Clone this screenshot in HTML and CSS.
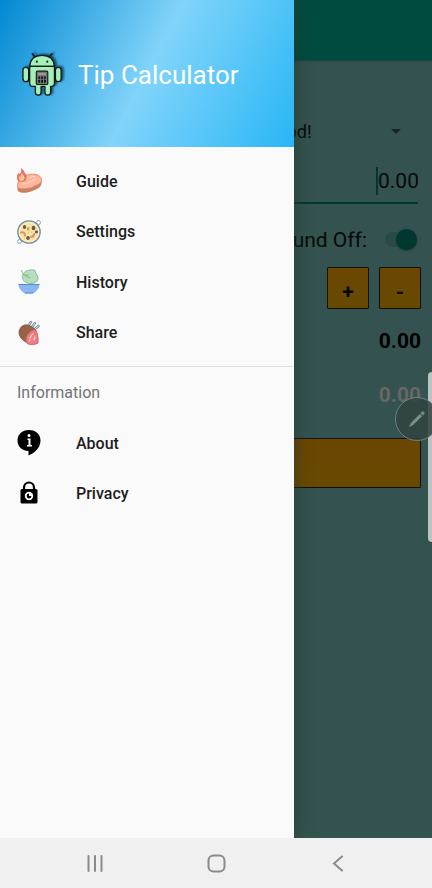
FILE: index.html
```html
<!DOCTYPE html>
<html lang="en">
<head>
<meta charset="utf-8">
<meta name="viewport" content="width=device-width, initial-scale=1">
<title>Tip Calculator</title>
<link rel="stylesheet" href="styles.css">
</head>
<body>
<div class="screen">
  <main class="app">
    <header class="toolbar"></header>
    <form class="form">
      <div class="service">
        <select class="service-select" aria-label="Service quality"><option>Good!</option></select>
        <svg class="caret" viewBox="0 0 10 5" aria-hidden="true"><path d="M0 0h10L5 5z" fill="#142523"/></svg>
      </div>
      <div class="amount"><span class="cursor"></span><input class="amount-input" type="text" value="0.00" aria-label="Bill amount"></div>
      <div class="round">
        <label for="round">Round Off:</label>
        <input class="switch" id="round" type="checkbox" role="switch" checked>
      </div>
      <div class="steps">
        <button class="gold step" type="button">+</button>
        <button class="gold step" type="button">-</button>
      </div>
      <output class="result">0.00</output>
      <output class="result faded">0.00</output>
      <button class="gold submit" type="button" aria-label="Calculate"></button>
    </form>
    <div class="edge-panel"></div>
    <button class="pen" type="button" aria-label="Pen menu">
      <svg viewBox="0 0 44 44" aria-hidden="true"><path d="M14 30l2-4 9-9 2 2-9 9zM26 16l2-2 2 2-2 2z" fill="#71908d" stroke="#71908d" stroke-width=".6" stroke-linejoin="round"/></svg>
    </button>
  </main>

  <aside class="drawer">
    <header class="drawer-head">
      <svg class="logo" viewBox="0 0 44 48" aria-hidden="true">
        <g fill="#a5efb9" stroke="#101c1a" stroke-width="1.4" stroke-linejoin="round" stroke-linecap="round">
          <path d="M14 6l-3-4M28 6l3-4" stroke-width="1.8"/>
          <rect x="1" y="16" width="6" height="15" rx="3"/>
          <rect x="35" y="16" width="6" height="15" rx="3"/>
          <path d="M8 15Q9 3.500 21 3.500T34 15z"/>
          <path d="M8 15h26v18q0 3-3 3h-1v6q0 3-3 3t-3-3v-6h-4v6q0 3-3 3t-3-3v-6h-3q-3 0-3-3z"/>
        </g>
        <circle cx="15.500" cy="10" r="1.100" fill="#101c1a"/><circle cx="26.500" cy="10" r="1.100" fill="#101c1a"/>
        <rect x="15" y="20" width="12" height="14" rx="1" fill="#777" stroke="#181818" stroke-width="1.200"/>
        <path d="M17 22h8v2h-8z" fill="#999"/>
        <path d="M17 25.500h2v2.500h-2zM20 25.500h2v2.500h-2zM23 25.500h2v2.500h-2zM17 29h2v3h-2zM20 29h2v3h-2zM23 29h2v3h-2z" fill="#151515"/>
      </svg>
      <h1 class="title">Tip Calculator</h1>
    </header>
    <nav class="menu">
      <ul class="list">
        <li><a class="item" href="#guide">
          <svg viewBox="0 0 26 26" aria-hidden="true">
            <path d="M1.500 17C2 12 6 9 11 7c5-2 14-1 14.500 5v4c-1 4-5 5-9 7-5 2-11 2.500-14 .500-1.500-1-1-4-1-6.500z" fill="#c98263"/>
            <path d="M1.500 17C2 12 6 9 11 7c5-2 14-1 14.500 5 0 4-5 5-9 7-4 1.500-10 2.500-14 1-1-.5-1-2-1-3z" fill="#ffb69b" stroke="#dc8d6f" stroke-width=".8"/>
            <path d="M7 16q4 0 7-2l6-3M14 9.500q3-1.500 5-1" fill="none" stroke="#ffdccb" stroke-linecap="round"/>
            <path d="M5 0q4 3 4 6l1-1q2 9-4 9-6 0-5-6l1-3 2 1q2-3 1-6z" fill="#e8736c"/>
            <path d="M5.500 5q3 3 3 5t-2.500 3q-4 0-3-5l1.500 1z" fill="#ffc98d"/>
          </svg><span>Guide</span></a></li>
        <li><a class="item" href="#settings">
          <svg viewBox="0 0 26 26" aria-hidden="true">
            <g fill="none" stroke="#8ea4b8"><circle cx="22.500" cy="3.500" r="2"/><circle cx="3.500" cy="22.500" r="2"/></g>
            <circle cx="13" cy="13" r="11.200" fill="#f8e5a2" stroke="#7890a6" stroke-width="1.300"/>
            <circle cx="13" cy="13" r="9.500" fill="none" stroke="#fff2c5"/>
            <g fill="#66585c"><ellipse cx="8.500" cy="8" rx="1.700" ry="2"/><ellipse cx="17.500" cy="9" rx="1.900" ry="2.200"/><ellipse cx="12" cy="19" rx="1.800" ry="2"/><ellipse cx="20.500" cy="13" rx="1.700" ry="1.400"/></g>
            <g fill="none" stroke="#e58b74" stroke-width="2" stroke-linecap="round"><path d="M5 13.500q4-1 4 3M15 18q3 0 3-3M12.500 9q-1 1 0 1.500"/></g>
            <path d="M12 14h1M8 19h1M15 13h1" stroke="#c6bb68"/>
          </svg><span>Settings</span></a></li>
        <li><a class="item" href="#history">
          <svg viewBox="0 0 26 26" aria-hidden="true">
            <path d="M6.500 7C7 3 11 .500 18 1c2 0 1 3 3 5 3 5-1 8.500-6 8.500S6 12 6.500 7z" fill="#b8dfbd" stroke="#7db891" stroke-width=".9"/>
            <path d="M5.500 1q1 6 9 8M9 6h4" fill="none" stroke="#7db891"/>
            <path d="M2.500 15h21q0 6-6.500 9.500H9Q2.500 21 2.500 15z" fill="#8bb7f0"/>
            <path d="M2.500 15.500h21M9 24h8" stroke="#5685ca"/>
          </svg><span>History</span></a></li>
        <li><a class="item" href="#share">
          <svg viewBox="0 0 26 26" aria-hidden="true">
            <g fill="none" stroke="#788f9d" stroke-width="2.600" stroke-linecap="round"><path d="M12 6l3-4M16 7l3-4M19 9l3.500-3"/></g>
            <g fill="none" stroke="#dce7ec" stroke-linecap="round"><path d="M12 6l3-4M16 7l3-4M19 9l3.500-3"/></g>
            <path d="M11 5c6 1 10 5 10 10 0 8-4 9-7 8.500C8 22 3 18 3 12.500 3 8 7 4 11 5z" fill="#966347" stroke="#7c5039" stroke-width=".7"/>
            <path d="M19.500 10c2 3 3 8 2.500 13-3 2-8 2-11 .500-1.500-3-1-6 1-9 2-3 5-5 7.500-4.500z" fill="#f37c80" stroke="#d46770"/>
            <path d="M14 18q1-3 3-4M18 20l1-3M13.500 21l.5-1" fill="none" stroke="#ffdadb" stroke-width="1.300" stroke-linecap="round"/>
          </svg><span>Share</span></a></li>
      </ul>
      <h2 class="section">Information</h2>
      <ul class="list">
        <li><a class="item" href="#about">
          <svg viewBox="0 0 26 26" aria-hidden="true">
            <path d="M13 0C6 0 1.500 4.500 1.500 10.500c0 6 4 10 11 10.500v4.500c5-2 12-7 12-15C24.500 4.500 20 0 13 0z" fill="#000"/>
            <circle cx="13" cy="5.500" r="1.500" fill="#fff"/><path d="M11.500 8.500h3v6.500H16v1.500h-5V15h1.500v-5h-1z" fill="#fff"/>
          </svg><span>About</span></a></li>
        <li><a class="item" href="#privacy">
          <svg viewBox="0 0 26 26" aria-hidden="true">
            <path d="M8 10V6.500a5 5 0 0 1 10 0V10" fill="none" stroke="#000" stroke-width="2.200"/>
            <rect x="4.500" y="8" width="17" height="14.500" rx="1.500" fill="#000"/>
            <circle cx="13" cy="15" r="4.200" fill="#fff"/><circle cx="13" cy="15" r="2.400" fill="#000"/><path d="M13 12v3h3a3 3 0 0 0-3-3z" fill="#fff"/>
          </svg><span>Privacy</span></a></li>
      </ul>
    </nav>
  </aside>
</div>
<footer class="system-nav">
  <button type="button" aria-label="Recent apps"><svg viewBox="0 0 20 20" aria-hidden="true"><path d="M3.500 3v15M10 3v15M16.500 3v15"/></svg></button>
  <button type="button" aria-label="Home"><svg viewBox="0 0 20 20" aria-hidden="true"><rect x="2.500" y="2.500" width="16" height="16" rx="5"/></svg></button>
  <button type="button" aria-label="Back"><svg viewBox="0 0 20 20" aria-hidden="true"><path d="M15 3.500l-8 7 8 7"/></svg></button>
</footer>
</body>
</html>
```
FILE: styles.css
```css
* { box-sizing: border-box; }

body {
  margin: 0;
  min-height: 100vh;
  display: flex;
  flex-direction: column;
  font-family: Roboto, "Liberation Sans", sans-serif;
  color: #1d1d1d;
}

button, input, select { font: inherit; color: inherit; margin: 0; padding: 0; border: 0; background: none; }
h1, h2, ul { margin: 0; padding: 0; font-weight: 400; }
ul { list-style: none; }
svg { display: block; }

.screen { position: relative; flex: 1; display: flex; overflow: hidden; }

/* Dimmed calculator behind the drawer */
.app { flex: 1; display: flex; flex-direction: column; background: #34524f; color: #040a09; }
.toolbar { height: 60px; background: #004b40; box-shadow: 0 1px 2px #243b38; }
.form { display: flex; flex-direction: column; align-items: flex-end; padding: 51px 11px 0 0; font-size: 21px; }

.service { display: flex; align-items: center; justify-content: flex-end; height: 40px; padding-right: 20px; font-size: 18px; }
.service-select { appearance: none; width: 127px; }
.caret { width: 10px; height: 5px; }

.amount { display: flex; align-items: center; justify-content: flex-end; align-self: stretch; height: 53px; margin: 0 3px 0 11px; padding-top: 8px; border-bottom: 2px solid #00382f; }
.cursor { width: 2px; height: 28px; background: #00382f; }
.amount-input { width: 40px; text-align: right; }

.round { display: flex; align-items: center; gap: 18px; height: 63px; padding: 8px 4px 0 0; }
.switch { appearance: none; display: flex; align-items: center; justify-content: flex-end; width: 32px; height: 15px; border-radius: 8px; background: #294b47; }
.switch::before { content: ""; width: 21px; height: 21px; flex: none; border-radius: 50%; background: #00382f; box-shadow: 0 1px 2px #203a37; }

.gold { border: 1px solid #141006; border-radius: 1px; background: linear-gradient(#6b4602, #674a02); }
.steps { display: flex; gap: 10px; }
.step { width: 42px; height: 42px; padding-top: 8px; font-weight: 700; }
.result { height: 54px; padding-top: 5px; line-height: 54px; font-weight: 700; color: #000; }
.faded { color: #676767; }
.submit { align-self: stretch; height: 50px; margin: 21px 0 0 11px; }

.edge-panel { position: absolute; right: 0; top: 372px; width: 4px; height: 170px; border-radius: 4px 0 0 4px; background: #bdc3c3; }
.pen { position: absolute; right: -7px; top: 397px; width: 44px; height: 44px; border: 1px solid #6d8582; border-radius: 50%; background: rgba(49, 67, 65, .85); }

/* Navigation drawer */
.drawer { position: absolute; top: 0; bottom: 0; left: 0; width: 68%; background: #fafafa; box-shadow: 0 0 14px rgba(38, 58, 44, .8); }
.drawer-head { display: flex; align-items: center; gap: 14px; height: 147px; padding: 3px 0 0 22px; background: linear-gradient(117deg, #0288d1, #81d4fa 50%, #29b6f6); }
.logo { width: 42px; height: 46px; filter: drop-shadow(2px -1px 1px rgba(0, 30, 50, .7)); }
.title { font-size: 26px; line-height: 32px; color: #fff; }
.menu { padding-top: 9px; }
.list { display: grid; grid-auto-rows: 1fr; }
.list:first-child { height: 202px; }
.list:last-child { height: 101px; }
.item { display: flex; align-items: center; gap: 34px; height: 100%; padding-left: 16px; color: inherit; font-size: 16px; font-weight: 500; text-decoration: none; }
.item svg { width: 26px; height: 26px; }
.section { margin-top: 8px; padding: 16px 17px 15px; border-top: 1px solid #dedede; font-size: 16px; line-height: 20px; color: #737373; }

.system-nav { display: flex; justify-content: center; gap: 77px; height: 50px; padding: 0; background: #f0f0f0; }
.system-nav button { width: 44px; display: flex; align-items: center; justify-content: center; }
.system-nav svg { width: 20px; height: 20px; fill: none; stroke: #8a8a8a; stroke-width: 2; stroke-linecap: round; }
```
